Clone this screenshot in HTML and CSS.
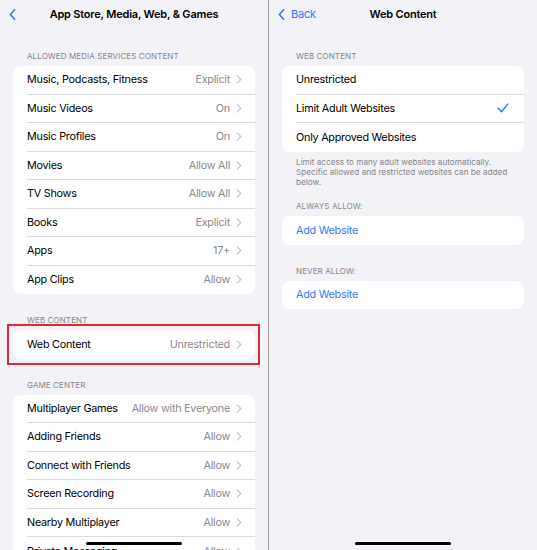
FILE: index.html
```html
<!DOCTYPE html>
<html>
<head>
<meta charset="utf-8">
<link rel="stylesheet" href="styles.css">
</head>
<body>
<div class="screen">
  <section class="panel">
    <div class="nav">
      <div class="nav-left">
        <svg class="back-chev" viewBox="0 0 8 13" width="7" height="11"><path d="M6.5 1 L1.5 6.5 L6.5 12" fill="none" stroke="#3478f6" stroke-width="1.8" stroke-linecap="round" stroke-linejoin="round"/></svg>
      </div>
      <div class="nav-title">App Store, Media, Web, &amp; Games</div>
      <div></div>
    </div>

    <div class="sec-head sec-head-first">ALLOWED MEDIA SERVICES CONTENT</div>
    <div class="card">
      <div class="row"><div class="row-body"><span class="label">Music, Podcasts, Fitness</span><span class="value">Explicit</span><svg class="chev" viewBox="0 0 6 10" width="6" height="9"><path d="M1 1 L5 5 L1 9" fill="none" stroke="#c4c4c8" stroke-width="1.3" stroke-linecap="round" stroke-linejoin="round"/></svg></div></div>
      <div class="row"><div class="row-body"><span class="label">Music Videos</span><span class="value">On</span><svg class="chev" viewBox="0 0 6 10" width="6" height="9"><path d="M1 1 L5 5 L1 9" fill="none" stroke="#c4c4c8" stroke-width="1.3" stroke-linecap="round" stroke-linejoin="round"/></svg></div></div>
      <div class="row"><div class="row-body"><span class="label">Music Profiles</span><span class="value">On</span><svg class="chev" viewBox="0 0 6 10" width="6" height="9"><path d="M1 1 L5 5 L1 9" fill="none" stroke="#c4c4c8" stroke-width="1.3" stroke-linecap="round" stroke-linejoin="round"/></svg></div></div>
      <div class="row"><div class="row-body"><span class="label">Movies</span><span class="value">Allow All</span><svg class="chev" viewBox="0 0 6 10" width="6" height="9"><path d="M1 1 L5 5 L1 9" fill="none" stroke="#c4c4c8" stroke-width="1.3" stroke-linecap="round" stroke-linejoin="round"/></svg></div></div>
      <div class="row"><div class="row-body"><span class="label">TV Shows</span><span class="value">Allow All</span><svg class="chev" viewBox="0 0 6 10" width="6" height="9"><path d="M1 1 L5 5 L1 9" fill="none" stroke="#c4c4c8" stroke-width="1.3" stroke-linecap="round" stroke-linejoin="round"/></svg></div></div>
      <div class="row"><div class="row-body"><span class="label">Books</span><span class="value">Explicit</span><svg class="chev" viewBox="0 0 6 10" width="6" height="9"><path d="M1 1 L5 5 L1 9" fill="none" stroke="#c4c4c8" stroke-width="1.3" stroke-linecap="round" stroke-linejoin="round"/></svg></div></div>
      <div class="row"><div class="row-body"><span class="label">Apps</span><span class="value">17+</span><svg class="chev" viewBox="0 0 6 10" width="6" height="9"><path d="M1 1 L5 5 L1 9" fill="none" stroke="#c4c4c8" stroke-width="1.3" stroke-linecap="round" stroke-linejoin="round"/></svg></div></div>
      <div class="row"><div class="row-body"><span class="label">App Clips</span><span class="value">Allow</span><svg class="chev" viewBox="0 0 6 10" width="6" height="9"><path d="M1 1 L5 5 L1 9" fill="none" stroke="#c4c4c8" stroke-width="1.3" stroke-linecap="round" stroke-linejoin="round"/></svg></div></div>
    </div>

    <div class="sec-head">WEB CONTENT</div>
    <div class="card highlighted">
      <div class="row"><div class="row-body"><span class="label">Web Content</span><span class="value">Unrestricted</span><svg class="chev" viewBox="0 0 6 10" width="6" height="9"><path d="M1 1 L5 5 L1 9" fill="none" stroke="#c4c4c8" stroke-width="1.3" stroke-linecap="round" stroke-linejoin="round"/></svg></div></div>
    </div>

    <div class="sec-head">GAME CENTER</div>
    <div class="card">
      <div class="row"><div class="row-body"><span class="label">Multiplayer Games</span><span class="value">Allow with Everyone</span><svg class="chev" viewBox="0 0 6 10" width="6" height="9"><path d="M1 1 L5 5 L1 9" fill="none" stroke="#c4c4c8" stroke-width="1.3" stroke-linecap="round" stroke-linejoin="round"/></svg></div></div>
      <div class="row"><div class="row-body"><span class="label">Adding Friends</span><span class="value">Allow</span><svg class="chev" viewBox="0 0 6 10" width="6" height="9"><path d="M1 1 L5 5 L1 9" fill="none" stroke="#c4c4c8" stroke-width="1.3" stroke-linecap="round" stroke-linejoin="round"/></svg></div></div>
      <div class="row"><div class="row-body"><span class="label">Connect with Friends</span><span class="value">Allow</span><svg class="chev" viewBox="0 0 6 10" width="6" height="9"><path d="M1 1 L5 5 L1 9" fill="none" stroke="#c4c4c8" stroke-width="1.3" stroke-linecap="round" stroke-linejoin="round"/></svg></div></div>
      <div class="row"><div class="row-body"><span class="label">Screen Recording</span><span class="value">Allow</span><svg class="chev" viewBox="0 0 6 10" width="6" height="9"><path d="M1 1 L5 5 L1 9" fill="none" stroke="#c4c4c8" stroke-width="1.3" stroke-linecap="round" stroke-linejoin="round"/></svg></div></div>
      <div class="row"><div class="row-body"><span class="label">Nearby Multiplayer</span><span class="value">Allow</span><svg class="chev" viewBox="0 0 6 10" width="6" height="9"><path d="M1 1 L5 5 L1 9" fill="none" stroke="#c4c4c8" stroke-width="1.3" stroke-linecap="round" stroke-linejoin="round"/></svg></div></div>
      <div class="row"><div class="row-body"><span class="label">Private Messaging</span><span class="value">Allow</span><svg class="chev" viewBox="0 0 6 10" width="6" height="9"><path d="M1 1 L5 5 L1 9" fill="none" stroke="#c4c4c8" stroke-width="1.3" stroke-linecap="round" stroke-linejoin="round"/></svg></div></div>
    </div>
    <div class="home-indicator"></div>
  </section>

  <div class="divider"></div>

  <section class="panel">
    <div class="nav">
      <div class="nav-left">
        <svg class="back-chev" viewBox="0 0 8 13" width="7" height="11"><path d="M6.5 1 L1.5 6.5 L6.5 12" fill="none" stroke="#3478f6" stroke-width="1.8" stroke-linecap="round" stroke-linejoin="round"/></svg>
        <span class="back-text">Back</span>
      </div>
      <div class="nav-title">Web Content</div>
      <div></div>
    </div>

    <div class="sec-head sec-head-first">WEB CONTENT</div>
    <div class="card">
      <div class="row"><div class="row-body"><span class="label">Unrestricted</span></div></div>
      <div class="row"><div class="row-body"><span class="label">Limit Adult Websites</span><svg class="check" viewBox="0 0 13 11" width="12" height="10"><path d="M1.2 5.6 L4.8 9.6 L11.8 1.2" fill="none" stroke="#3478f6" stroke-width="1.6" stroke-linecap="round" stroke-linejoin="round"/></svg></div></div>
      <div class="row"><div class="row-body"><span class="label">Only Approved Websites</span></div></div>
    </div>
    <p class="sec-foot">Limit access to many adult websites automatically. Specific allowed and restricted websites can be added below.</p>

    <div class="sec-head sec-head-tight">ALWAYS ALLOW:</div>
    <div class="card">
      <div class="row"><div class="row-body"><span class="label link">Add Website</span></div></div>
    </div>

    <div class="sec-head">NEVER ALLOW:</div>
    <div class="card">
      <div class="row"><div class="row-body"><span class="label link">Add Website</span></div></div>
    </div>
    <div class="home-indicator"></div>
  </section>
</div>
</body>
</html>
```

FILE: styles.css
```css
* { box-sizing: border-box; }

html, body {
  margin: 0;
  padding: 0;
  background: #f2f2f7;
}

body {
  font-family: Inter, "Noto Sans", "Liberation Sans", sans-serif;
  color: #000;
  -webkit-font-smoothing: antialiased;
}

.screen {
  display: flex;
  width: 537px;
  height: 550px;
  overflow: hidden;
}

.panel {
  position: relative;
  width: 268px;
  flex: 0 0 268px;
  height: 550px;
  background: #f2f2f7;
  overflow: hidden;
}

.divider {
  flex: 0 0 1px;
  width: 1px;
  background: #9e9e9e;
}

.nav {
  height: 28px;
  display: grid;
  grid-template-columns: 1fr auto 1fr;
  align-items: center;
}

.nav-left {
  display: flex;
  align-items: center;
  padding-left: 9px;
  gap: 6px;
}

.back-chev { display: block; }

.back-text {
  font-size: 11px;
  color: #3478f6;
  letter-spacing: -0.2px;
}

.nav-title {
  font-size: 11px;
  font-weight: 600;
  letter-spacing: -0.2px;
  text-align: center;
  white-space: nowrap;
}

.sec-head {
  margin: 21px 0 5px;
  padding-left: 27px;
  font-size: 8px;
  line-height: 10px;
  color: #86868b;
  letter-spacing: 0.1px;
}

.sec-head-first {
  margin-top: 23px;
}

.sec-head-tight {
  margin-top: 14.5px;
}

.card {
  margin: 0 13px;
  background: #fff;
  border-radius: 8px;
}

.highlighted {
  position: relative;
}

.highlighted::after {
  content: "";
  position: absolute;
  top: -6px;
  left: -6px;
  right: -5px;
  bottom: -6px;
  border: 2px solid #dc2a3c;
  pointer-events: none;
}

.row {
  height: 28.5px;
  padding-left: 14px;
  display: flex;
}

.row-body {
  flex: 1;
  display: flex;
  align-items: center;
  padding-right: 13px;
  border-bottom: 0.5px solid #dcdce0;
  min-width: 0;
}

.row:last-child .row-body {
  border-bottom: none;
}

.label {
  flex: 1;
  font-size: 10.8px;
  letter-spacing: -0.25px;
  white-space: nowrap;
}

.link {
  color: #3478f6;
}

.value {
  font-size: 10.8px;
  letter-spacing: -0.25px;
  color: #8a8a8e;
  white-space: nowrap;
  margin-right: 6px;
}

.chev { display: block; flex: none; }

.check {
  display: block;
  flex: none;
  margin-right: 2px;
}

.sec-foot {
  margin: 5px 0 0;
  padding: 0 27px;
  font-size: 8.2px;
  line-height: 10px;
  color: #86868b;
}

.home-indicator {
  position: absolute;
  bottom: 5px;
  left: 50%;
  width: 96px;
  height: 3px;
  margin-left: -48px;
  border-radius: 2px;
  background: #000;
}
```
